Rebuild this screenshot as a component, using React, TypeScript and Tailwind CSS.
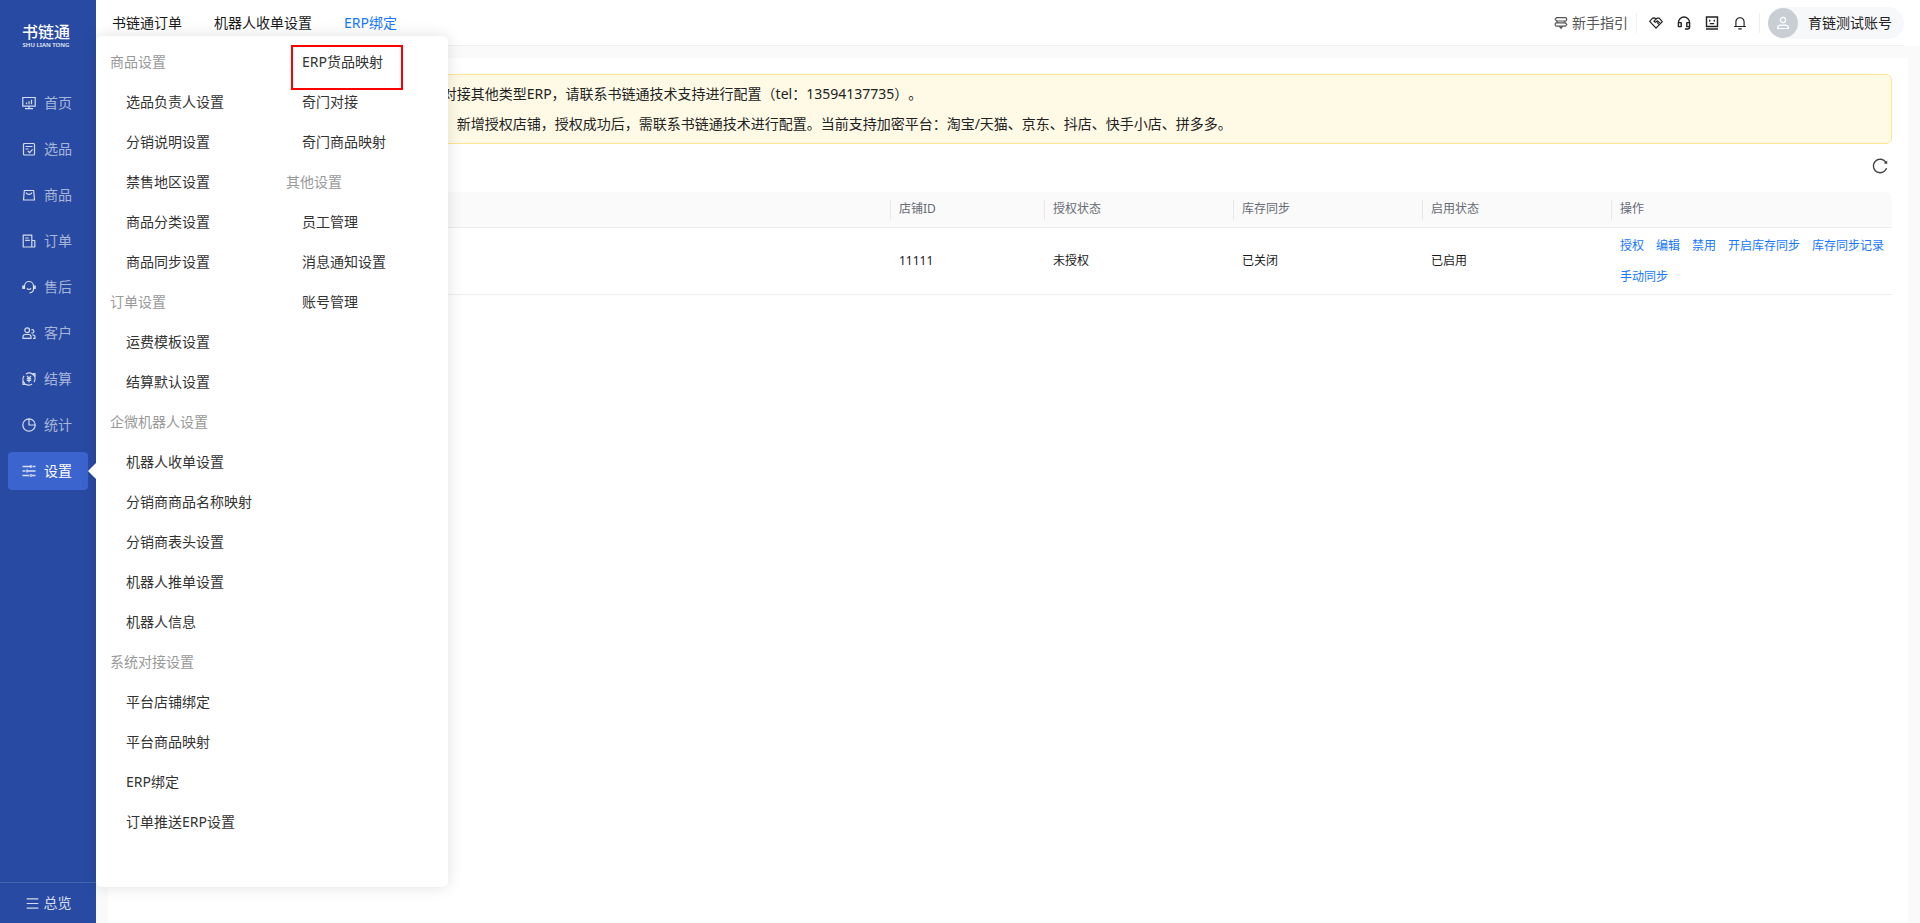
import { useState, type ReactNode } from 'react';
import clsx from 'clsx';
import { AiOutlineMenu, AiOutlineReload } from 'react-icons/ai';
import { RiNotification3Line } from 'react-icons/ri';

type NavItem = { label: string; icon: ReactNode };
type MenuEntry = { label: string; heading?: boolean; marked?: boolean };

function Icon({ children, size = 14 }: { children: ReactNode; size?: number }) {
  return (
    <svg
      width={size}
      height={size}
      viewBox="0 0 14 14"
      fill="none"
      stroke="currentColor"
      strokeWidth={1.2}
      className="shrink-0"
      aria-hidden="true"
    >
      {children}
    </svg>
  );
}

const NAV: NavItem[] = [
  {
    label: '首页',
    icon: <Icon><path d="M.8 1.5h12.4v8.7H.8zM7 10.2v2.3M3 12.6h8M4.5 8.2V6.4M7 8.2V5.2M9.5 8.2V3.8" /></Icon>,
  },
  {
    label: '选品',
    icon: <Icon><rect x="1.5" y="1.5" width="11" height="11.5" rx="1" /><path d="M3.5 4.5h7M3.5 7h3M5.8 9l1.8 1.7 3-3.4" /></Icon>,
  },
  {
    label: '商品',
    icon: <Icon><path d="M2.3 2.5h9.4l.8 9.5h-11zM4.2 4.5c.4 2.4 5.2 2.4 5.6 0" strokeLinejoin="round" /></Icon>,
  },
  {
    label: '订单',
    icon: <Icon><path d="M9.8 13H1.2V1.2h8.6zM9.8 6.5h3V13h-3M3.2 4h3.4M3.2 6.3h4.6" strokeLinejoin="round" /></Icon>,
  },
  {
    label: '售后',
    icon: <Icon><path d="M2.5 9V6a4.5 4.5 0 0 1 9 0v3c0 2.3-1.6 3.6-4 3.8M5 8.2c.7 1.6 3.3 1.6 4 0" /><path d="M1.2 5.5v3.6M12.8 5.5v3.6" strokeWidth={2} /></Icon>,
  },
  {
    label: '客户',
    icon: <Icon><circle cx="5.2" cy="4.2" r="2.4" /><path d="M1 12.4v-1.6c0-1.5 1-2.3 2.2-2.3h3.6c1.2 0 2.2.8 2.2 2.3v1.6zM9.4 3.8a1.7 1.7 0 1 1 0 3M10.4 8.8c1.5 0 2.6.7 2.6 2v1.6h-2" /></Icon>,
  },
  {
    label: '结算',
    icon: (
      <Icon>
        <path d="M3 11.7A6 6 0 0 1 2 3.9M3.9 2.1a6 6 0 0 1 7.6.9M11 2.3a6 6 0 0 1 1 7.8M10.1 11.9a6 6 0 0 1-6.6.4M1 8.8v3.6h2.4M13 5.2V1.6h-2.2" />
        <path d="M5 3.8l2 2.4 2-2.4M4.8 6.6h4.4M4.8 8.4h4.4M7 6.2v4.2" />
      </Icon>
    ),
  },
  {
    label: '统计',
    icon: <Icon><circle cx="7" cy="7" r="6.2" /><path d="M7 .8V7h6.2" /></Icon>,
  },
  {
    label: '设置',
    icon: <Icon><path d="M.5 2.5h8M10.5 2.5h3M.5 7h3M5.5 7h8M.5 11.5h7M10 11.5h3.5M9 1v3M5 5.5v3M9 10v3" strokeWidth={1.4} /></Icon>,
  },
];

const MENU_COLUMNS: MenuEntry[][] = [
  [
    { label: '商品设置', heading: true },
    { label: '选品负责人设置' },
    { label: '分销说明设置' },
    { label: '禁售地区设置' },
    { label: '商品分类设置' },
    { label: '商品同步设置' },
    { label: '订单设置', heading: true },
    { label: '运费模板设置' },
    { label: '结算默认设置' },
    { label: '企微机器人设置', heading: true },
    { label: '机器人收单设置' },
    { label: '分销商商品名称映射' },
    { label: '分销商表头设置' },
    { label: '机器人推单设置' },
    { label: '机器人信息' },
    { label: '系统对接设置', heading: true },
    { label: '平台店铺绑定' },
    { label: '平台商品映射' },
    { label: 'ERP绑定' },
    { label: '订单推送ERP设置' },
  ],
  [
    { label: 'ERP货品映射', marked: true },
    { label: '奇门对接' },
    { label: '奇门商品映射' },
    { label: '其他设置', heading: true },
    { label: '员工管理' },
    { label: '消息通知设置' },
    { label: '账号管理' },
  ],
];

const TABS = ['书链通订单', '机器人收单设置', 'ERP绑定'];

const COLUMNS = [
  { title: '', width: '' },
  { title: '店铺ID', width: 'w-[154px]' },
  { title: '授权状态', width: 'w-[189px]' },
  { title: '库存同步', width: 'w-[189px]' },
  { title: '启用状态', width: 'w-[189px]' },
  { title: '操作', width: 'w-[280px]' },
];

const ROWS = [
  { name: '', id: '11111', auth: '未授权', stock: '已关闭', status: '已启用' },
];

const ACTIONS = ['授权', '编辑', '禁用', '开启库存同步', '库存同步记录', '手动同步'];

function SettingsMenu() {
  return (
    <div className="absolute left-full top-9 bottom-9 z-10 w-[352px] rounded-md bg-white pt-[6px] shadow-[0_0_16px_rgba(0,0,0,0.12)]">
      <div className="grid grid-cols-2">
        {MENU_COLUMNS.map((column, i) => (
          <ul key={i}>
            {column.map(entry => (
              <li key={entry.label} className={clsx('relative flex h-10 items-center whitespace-nowrap', entry.heading ? 'pl-[14px] text-[#999999]' : 'pl-[30px] text-[#333333]')}>
                {entry.heading ? <span>{entry.label}</span> : <a href="#">{entry.label}</a>}
                {entry.marked && <span className="absolute left-[19px] top-[3px] h-[45px] w-28 border-2 border-[#ff0000]" />}
              </li>
            ))}
          </ul>
        ))}
      </div>
    </div>
  );
}

function Sidebar() {
  const [active, setActive] = useState('设置');

  return (
    <aside className="relative flex w-24 shrink-0 flex-col bg-[#284aa2] text-white/60">
      <div className="flex h-[84px] flex-col items-center pt-[22px] pr-1 text-white">
        <span className="text-base leading-5 font-medium">书链通</span>
        <span className="text-[6px] leading-[6px] font-semibold text-white/90">SHU LIAN TONG</span>
      </div>
      <nav className="flex flex-1 flex-col gap-2 px-2">
        {NAV.map(item => (
          <button
            key={item.label}
            onClick={() => setActive(item.label)}
            className={clsx('relative flex h-[38px] items-center gap-2 rounded pl-[14px]', active === item.label && 'bg-[#3b64cf] text-white')}
          >
            <span className="text-white/80">{item.icon}</span>
            {item.label}
            {active === item.label && (
              <span className="absolute left-full z-20 border-y-8 border-r-8 border-y-transparent border-r-white" />
            )}
          </button>
        ))}
      </nav>
      <button className="flex h-[41px] items-center justify-center gap-1 border-t border-white/15 text-white/80">
        <AiOutlineMenu size={15} />
        总览
      </button>
      <SettingsMenu />
    </aside>
  );
}

function Header() {
  return (
    <div className="bg-white pr-4">
      <header className="flex h-[46px] items-center justify-between border-b border-[#eeeeee] pl-4">
        <nav className="flex gap-8">
          {TABS.map(tab => (
            <a key={tab} href="#" className={tab === 'ERP绑定' ? 'text-[#1677ff]' : 'text-[#1a1a1a]'}>{tab}</a>
          ))}
        </nav>
        <div className="flex items-center text-[#222222]">
          <a href="#" className="flex items-center gap-1 text-[#555555]">
            <Icon>
              <path d="M2.6 1.6h8.8q1.2 0 1.2 1.2v1q0 1.2-1.2 1.2H2.6L1.2 3.3zM11.4 6.8H2.4q-1.2 0-1.2 1.2v1q0 1.2 1.2 1.2h9l1.4-1.7zM3.2 5v1.8M10.8 5v1.8M5.4 10.4 7 12.4l1.6-2" />
            </Icon>
            新手指引
          </a>
          <span className="mx-2 h-5 w-px bg-[#eeeeee]" />
          <div className="flex gap-[14px] px-1">
            <button aria-label="合作">
              <Icon>
                <path d="M7 2.8 5.6 1.9 3.6 2.2.7 5.4 7 12.2 13.3 5.6 10.2 2.1 8.2 2 5 5.2l1.4 1.2L8.4 4.8 11.6 7.6M8 6.4l2.4 2.4" strokeLinejoin="round" />
              </Icon>
            </button>
            <button aria-label="客服">
              <Icon>
                <path d="M1.4 10V6.6a5.6 5.6 0 0 1 11.2 0V11q0 2-2 2H8M1.4 6.6h2.8v4H1.4zM9.8 6.6h2.8v4H9.8z" strokeWidth={1.4} strokeLinejoin="round" />
              </Icon>
            </button>
            <button aria-label="反馈">
              <Icon>
                <path d="M1.5 1h11v9.5h-11zM1 13h12M4.7 3.8v1.6M9.3 3.8v1.6M4.8 7.6h4.4" strokeWidth={1.4} />
              </Icon>
            </button>
            <button aria-label="通知"><RiNotification3Line size={14} /></button>
          </div>
          <span className="mx-2 h-5 w-px bg-[#eeeeee]" />
          <button className="flex h-8 items-center gap-[10px] rounded-full bg-[#f7f8fa] pr-3">
            <span className="flex size-[30px] items-center justify-center rounded-full bg-[#c9cdd4] text-white">
              <Icon>
                <circle cx="7" cy="4" r="2.6" />
                <path d="M1.5 12.5c0-2.4 1.4-3.4 3.5-3.4h4c2.1 0 3.5 1 3.5 3.4z" />
              </Icon>
            </span>
            育链测试账号
          </button>
        </div>
      </header>
    </div>
  );
}

function ShopTable() {
  return (
    <table className="w-full table-fixed text-left text-xs">
      <thead>
        <tr className="border-b border-[#eeeeee] text-[#666b75]">
          {COLUMNS.map((col, i) => (
            <th key={col.title} className={clsx('relative h-[35px] bg-[#fafafa] px-2 font-normal last:rounded-tr-lg', col.width)}>
              {col.title}
              {i < COLUMNS.length - 1 && <span className="absolute top-2 right-0 h-5 w-px bg-[#e8e8e8]" />}
            </th>
          ))}
        </tr>
      </thead>
      <tbody>
        {ROWS.map(row => (
          <tr key={row.id} className="border-b border-[#eeeeee] text-[#1a1a1a]">
            <td className="px-2">{row.name}</td>
            <td className="px-2">{row.id}</td>
            <td className="px-2">{row.auth}</td>
            <td className="px-2">{row.stock}</td>
            <td className="px-2">{row.status}</td>
            <td className="py-2 pl-2">
              <div className="flex flex-wrap gap-3 leading-[19px] text-[#1677ff]">
                {ACTIONS.map(action => <button key={action}>{action}</button>)}
              </div>
            </td>
          </tr>
        ))}
      </tbody>
    </table>
  );
}

export default function App() {
  return (
    <div className="flex min-h-screen bg-[#fafafa] font-['Noto_Sans','Noto_Sans_CJK_SC',sans-serif] text-sm">
      <Sidebar />
      <div className="flex min-w-0 flex-1 flex-col">
        <Header />
        <main className="flex flex-1 flex-col px-3 pt-3">
          <section className="flex-1 bg-white p-4">
            <div className="rounded-md border border-[#ffe58f] bg-[#fffae6] px-3 py-1 leading-[30px] text-[#222222] [text-spacing-trim:space-all]">
              <p>1、 当前系统支持对接聚水潭、旺店通等系统，或对接其他类型ERP，请联系书链通技术支持进行配置（tel：13594137735）。</p>
              <p>2、如需对接平台加密订单请先在本页面点击按钮， 新增授权店铺，授权成功后，需联系书链通技术进行配置。当前支持加密平台：淘宝/天猫、京东、抖店、快手小店、拼多多。</p>
            </div>
            <div className="flex h-12 items-center justify-end px-[3px] pb-1">
              <button aria-label="刷新" className="text-[#444444]"><AiOutlineReload size={18} /></button>
            </div>
            <ShopTable />
          </section>
        </main>
      </div>
    </div>
  );
}
